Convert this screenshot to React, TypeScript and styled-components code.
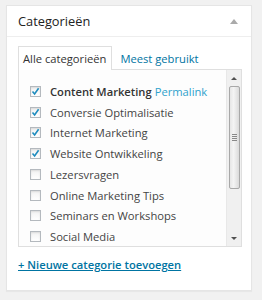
import React from "react";
import styled, { createGlobalStyle } from "styled-components";

const GlobalStyle = createGlobalStyle`
  html, body {
    margin: 0;
    padding: 0;
    background: #f1f1f1;
    font-family: "Open Sans", "Liberation Sans", sans-serif;
  }
`;

const Page = styled.div`
  width: 262px;
  height: 300px;
  padding: 5px 0 0 6px;
  box-sizing: border-box;
`;

const Box = styled.div`
  width: 246px;
  height: 286px;
  box-sizing: border-box;
  background: #fff;
  border: 1px solid #e5e5e5;
  box-shadow: 0 1px 1px rgba(0, 0, 0, 0.04);
  display: flex;
  flex-direction: column;
`;

const Header = styled.div`
  height: 30px;
  border-bottom: 1px solid #eee;
  display: flex;
  align-items: center;
  justify-content: space-between;
  padding: 0 12px 0 11px;
`;

const Title = styled.h3`
  margin: 0;
  font-size: 12.8px;
  font-weight: 400;
  color: #222;
  line-height: 1;
`;

const Toggle = styled.span`
  width: 0;
  height: 0;
  border-left: 4px solid transparent;
  border-right: 4px solid transparent;
  border-bottom: 5px solid #aaa;
  margin-right: 1px;
`;

const Inside = styled.div`
  padding: 8px 11px 0 11px;
  display: flex;
  flex-direction: column;
`;

const Tabs = styled.div`
  display: flex;
  align-items: flex-end;
  height: 24px;
`;

const Tab = styled.div<{ $active?: boolean }>`
  height: 24px;
  box-sizing: border-box;
  padding: 0 5px 0 4px;
  display: flex;
  align-items: center;
  font-size: 11.2px;
  color: ${(p) => (p.$active ? "#333" : "#0074a2")};
  background: ${(p) => (p.$active ? "#fff" : "transparent")};
  border: 1px solid ${(p) => (p.$active ? "#dfdfdf" : "transparent")};
  border-bottom: none;
  margin-right: 3px;
  margin-bottom: -1px;
  position: relative;
  z-index: 1;
  white-space: nowrap;
`;

const Panel = styled.div`
  width: 224px;
  height: 178px;
  box-sizing: border-box;
  border: 1px solid #dfdfdf;
  background: #fdfdfd;
  display: flex;
`;

const List = styled.ul`
  flex: 1;
  margin: 0;
  padding: 11px 0 0 11px;
  list-style: none;
  overflow: hidden;
`;

const Row = styled.li`
  height: 20.75px;
  display: flex;
  align-items: center;
  font-size: 11.2px;
  color: #444;
  white-space: nowrap;
`;

const Check = styled.span`
  width: 11px;
  height: 11px;
  box-sizing: border-box;
  border: 1px solid #b4b9be;
  background: linear-gradient(#f2f2f2, #fff);
  box-shadow: inset 0 1px 2px rgba(0, 0, 0, 0.1);
  margin-right: 9px;
  flex: none;
  display: flex;
  align-items: center;
  justify-content: center;
`;

const Name = styled.span<{ $bold?: boolean }>`
  font-weight: ${(p) => (p.$bold ? 600 : 400)};
  color: ${(p) => (p.$bold ? "#333" : "#444")};
`;

const Permalink = styled.span`
  color: #2ea2cc;
  margin-left: 3px;
`;

const Scrollbar = styled.div`
  width: 14px;
  background: #f0f0f0;
  border-left: 1px solid #e8e8e8;
  display: flex;
  flex-direction: column;
  align-items: center;
`;

const Arrow = styled.div<{ $down?: boolean }>`
  height: 16px;
  width: 100%;
  display: flex;
  align-items: center;
  justify-content: center;
  &::after {
    content: "";
    border-left: 3px solid transparent;
    border-right: 3px solid transparent;
    ${(p) =>
      p.$down ? "border-top: 3px solid #505050;" : "border-bottom: 3px solid #505050;"}
  }
`;

const Thumb = styled.div`
  width: 11px;
  height: 103px;
  box-sizing: border-box;
  border: 1px solid #a8a8a8;
  border-radius: 2px;
  background: linear-gradient(to right, #e6e6e6, #f4f4f4 40%, #dadada);
  display: flex;
  flex-direction: column;
  align-items: center;
  justify-content: center;
  gap: 1px;
`;

const Grip = styled.span`
  width: 5px;
  height: 1px;
  background: #888;
`;

const Spacer = styled.div`
  flex: 1;
`;

const AddLink = styled.a`
  margin-top: 10px;
  font-size: 11.2px;
  font-weight: 600;
  color: #0074a2;
  text-decoration: underline;
  line-height: 16px;
  align-self: flex-start;
`;

const categories = [
  { name: "Content Marketing", checked: true, bold: true },
  { name: "Conversie Optimalisatie", checked: true },
  { name: "Internet Marketing", checked: true },
  { name: "Website Ontwikkeling", checked: true },
  { name: "Lezersvragen", checked: false },
  { name: "Online Marketing Tips", checked: false },
  { name: "Seminars en Workshops", checked: false },
  { name: "Social Media", checked: false },
];

const CheckMark = () => (
  <svg width="9" height="9" viewBox="0 0 9 9">
    <path d="M1.5 4.5 L3.6 7 L7.6 1.2" fill="none" stroke="#1e8cbe" strokeWidth="1.6" />
  </svg>
);

const App: React.FC = () => {
  return (
    <>
      <GlobalStyle />
      <Page>
        <Box>
          <Header>
            <Title>Categorieën</Title>
            <Toggle />
          </Header>
          <Inside>
            <Tabs>
              <Tab $active>Alle categorieën</Tab>
              <Tab>Meest gebruikt</Tab>
            </Tabs>
            <Panel>
              <List>
                {categories.map((c) => (
                  <Row key={c.name}>
                    <Check>{c.checked && <CheckMark />}</Check>
                    <Name $bold={c.bold}>{c.name}</Name>
                    {c.bold && <Permalink>Permalink</Permalink>}
                  </Row>
                ))}
              </List>
              <Scrollbar>
                <Arrow />
                <Thumb>
                  <Grip />
                  <Grip />
                  <Grip />
                  <Grip />
                </Thumb>
                <Spacer />
                <Arrow $down />
              </Scrollbar>
            </Panel>
            <AddLink href="#">+ Nieuwe categorie toevoegen</AddLink>
          </Inside>
        </Box>
      </Page>
    </>
  );
};

export default App;
